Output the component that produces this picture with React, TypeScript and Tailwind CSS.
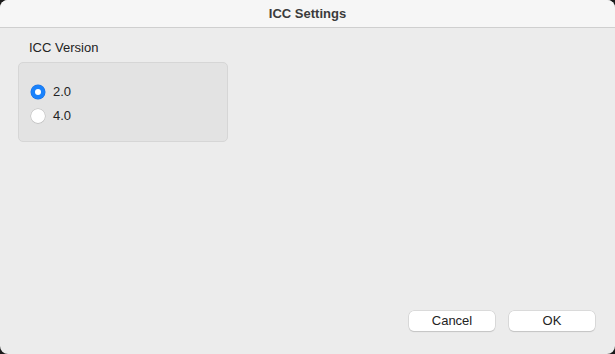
import { useState } from 'react'

const FONT = { fontFamily: '"Liberation Sans", Inter, Arial, sans-serif' }

function Radio({ checked, label, onSelect }: { checked: boolean; label: string; onSelect: () => void }) {
  return (
    <button onClick={onSelect} className="flex items-center gap-[8px] h-[24px] text-[13px] text-[#232323]">
      {checked ? (
        <span className="w-[14px] h-[14px] rounded-full bg-[#1a82fb] flex items-center justify-center shadow-[0_0_0_0.5px_#1a6fe0]">
          <span className="w-[6px] h-[6px] rounded-full bg-white" />
        </span>
      ) : (
        <span className="w-[14px] h-[14px] rounded-full bg-white shadow-[0_0_0_0.5px_#b9b9b9,0_0.5px_1px_rgba(0,0,0,0.15)]" />
      )}
      <span>{label}</span>
    </button>
  )
}

export default function App() {
  const [version, setVersion] = useState('2.0')

  return (
    <div className="w-[615px] h-[354px] bg-[#1b1b1b]" style={FONT}>
      <div className="w-full h-full rounded-[8px] overflow-hidden bg-[#ececec] flex flex-col">
        {/* Title bar */}
        <div className="h-[28px] flex-none bg-[#f6f6f6] border-b border-[#cfcfcf] flex items-center justify-center">
          <span className="text-[13px] font-bold text-[#3b3b3b]">ICC Settings</span>
        </div>

        {/* Body */}
        <div className="flex-1 flex flex-col px-[18px] pt-[12px] pb-[23px]">
          <div className="pl-[11px] text-[13px] text-[#232323] leading-[16px]">ICC Version</div>
          <div className="mt-[6px] w-[210px] h-[80px] rounded-[5px] bg-[#e3e3e3] border border-[#d6d6d6] flex flex-col pl-[12px] pt-[17px]">
            <Radio checked={version === '2.0'} label="2.0" onSelect={() => setVersion('2.0')} />
            <Radio checked={version === '4.0'} label="4.0" onSelect={() => setVersion('4.0')} />
          </div>

          <div className="mt-auto flex justify-end gap-[14px] pr-[2px]">
            <button className="w-[86px] h-[20px] rounded-[5px] bg-white text-[13px] text-[#232323] shadow-[0_0_0_0.5px_#c8c8c8,0_1px_1px_rgba(0,0,0,0.18)]">
              Cancel
            </button>
            <button className="w-[86px] h-[20px] rounded-[5px] bg-white text-[13px] text-[#232323] shadow-[0_0_0_0.5px_#c8c8c8,0_1px_1px_rgba(0,0,0,0.18)]">
              OK
            </button>
          </div>
        </div>
      </div>
    </div>
  )
}
